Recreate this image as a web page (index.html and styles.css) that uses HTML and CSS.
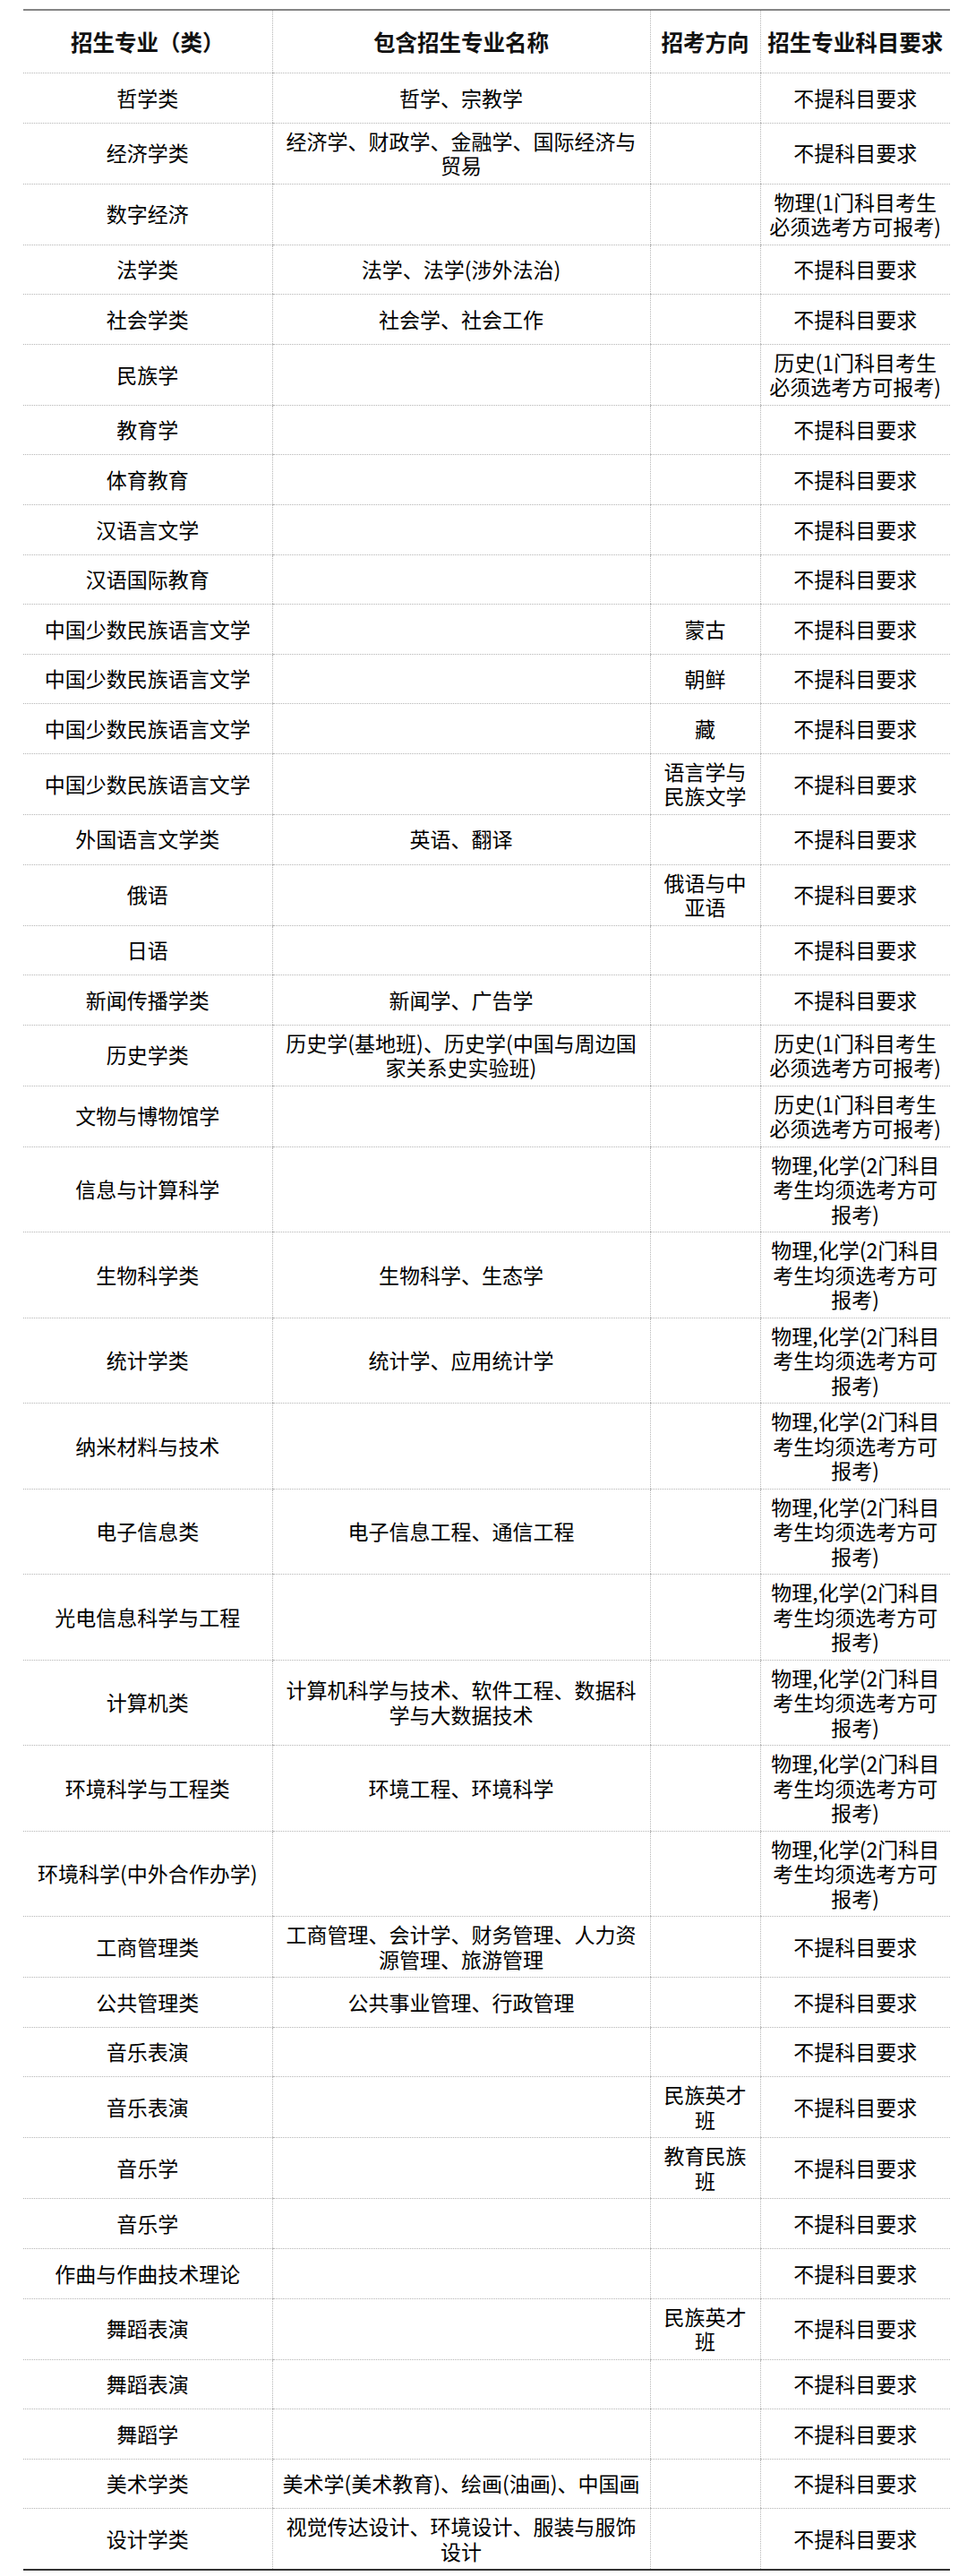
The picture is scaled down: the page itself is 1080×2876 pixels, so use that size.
FILE: index.html
```html
<!DOCTYPE html>
<html lang="zh-CN">
<head>
<meta charset="utf-8">
<title>招生专业科目要求</title>
<link rel="stylesheet" href="styles.css">
</head>
<body>
<table class="plan">
  <colgroup>
    <col class="w1"><col class="w2"><col class="w3"><col class="w4">
  </colgroup>
  <thead>
    <tr>
      <th>招生专业（类）</th>
      <th>包含招生专业名称</th>
      <th>招考方向</th>
      <th>招生专业科目要求</th>
    </tr>
  </thead>
  <tbody>
    <tr><td>哲学类</td><td>哲学、宗教学</td><td></td><td>不提科目要求</td></tr>
    <tr><td>经济学类</td><td>经济学、财政学、金融学、国际经济与贸易</td><td></td><td>不提科目要求</td></tr>
    <tr><td>数字经济</td><td></td><td></td><td>物理(1门科目考生必须选考方可报考)</td></tr>
    <tr><td>法学类</td><td>法学、法学(涉外法治)</td><td></td><td>不提科目要求</td></tr>
    <tr><td>社会学类</td><td>社会学、社会工作</td><td></td><td>不提科目要求</td></tr>
    <tr><td>民族学</td><td></td><td></td><td>历史(1门科目考生必须选考方可报考)</td></tr>
    <tr><td>教育学</td><td></td><td></td><td>不提科目要求</td></tr>
    <tr><td>体育教育</td><td></td><td></td><td>不提科目要求</td></tr>
    <tr><td>汉语言文学</td><td></td><td></td><td>不提科目要求</td></tr>
    <tr><td>汉语国际教育</td><td></td><td></td><td>不提科目要求</td></tr>
    <tr><td>中国少数民族语言文学</td><td></td><td>蒙古</td><td>不提科目要求</td></tr>
    <tr><td>中国少数民族语言文学</td><td></td><td>朝鲜</td><td>不提科目要求</td></tr>
    <tr><td>中国少数民族语言文学</td><td></td><td>藏</td><td>不提科目要求</td></tr>
    <tr><td>中国少数民族语言文学</td><td></td><td>语言学与民族文学</td><td>不提科目要求</td></tr>
    <tr><td>外国语言文学类</td><td>英语、翻译</td><td></td><td>不提科目要求</td></tr>
    <tr><td>俄语</td><td></td><td>俄语与中亚语</td><td>不提科目要求</td></tr>
    <tr><td>日语</td><td></td><td></td><td>不提科目要求</td></tr>
    <tr><td>新闻传播学类</td><td>新闻学、广告学</td><td></td><td>不提科目要求</td></tr>
    <tr><td>历史学类</td><td>历史学(基地班)、历史学(中国与周边国家关系史实验班)</td><td></td><td>历史(1门科目考生必须选考方可报考)</td></tr>
    <tr><td>文物与博物馆学</td><td></td><td></td><td>历史(1门科目考生必须选考方可报考)</td></tr>
    <tr><td>信息与计算科学</td><td></td><td></td><td>物理,化学(2门科目考生均须选考方可报考)</td></tr>
    <tr><td>生物科学类</td><td>生物科学、生态学</td><td></td><td>物理,化学(2门科目考生均须选考方可报考)</td></tr>
    <tr><td>统计学类</td><td>统计学、应用统计学</td><td></td><td>物理,化学(2门科目考生均须选考方可报考)</td></tr>
    <tr><td>纳米材料与技术</td><td></td><td></td><td>物理,化学(2门科目考生均须选考方可报考)</td></tr>
    <tr><td>电子信息类</td><td>电子信息工程、通信工程</td><td></td><td>物理,化学(2门科目考生均须选考方可报考)</td></tr>
    <tr><td>光电信息科学与工程</td><td></td><td></td><td>物理,化学(2门科目考生均须选考方可报考)</td></tr>
    <tr><td>计算机类</td><td>计算机科学与技术、软件工程、数据科学与大数据技术</td><td></td><td>物理,化学(2门科目考生均须选考方可报考)</td></tr>
    <tr><td>环境科学与工程类</td><td>环境工程、环境科学</td><td></td><td>物理,化学(2门科目考生均须选考方可报考)</td></tr>
    <tr><td>环境科学(中外合作办学)</td><td></td><td></td><td>物理,化学(2门科目考生均须选考方可报考)</td></tr>
    <tr><td>工商管理类</td><td>工商管理、会计学、财务管理、人力资源管理、旅游管理</td><td></td><td>不提科目要求</td></tr>
    <tr><td>公共管理类</td><td>公共事业管理、行政管理</td><td></td><td>不提科目要求</td></tr>
    <tr><td>音乐表演</td><td></td><td></td><td>不提科目要求</td></tr>
    <tr><td>音乐表演</td><td></td><td>民族英才班</td><td>不提科目要求</td></tr>
    <tr><td>音乐学</td><td></td><td>教育民族班</td><td>不提科目要求</td></tr>
    <tr><td>音乐学</td><td></td><td></td><td>不提科目要求</td></tr>
    <tr><td>作曲与作曲技术理论</td><td></td><td></td><td>不提科目要求</td></tr>
    <tr><td>舞蹈表演</td><td></td><td>民族英才班</td><td>不提科目要求</td></tr>
    <tr><td>舞蹈表演</td><td></td><td></td><td>不提科目要求</td></tr>
    <tr><td>舞蹈学</td><td></td><td></td><td>不提科目要求</td></tr>
    <tr><td>美术学类</td><td>美术学(美术教育)、绘画(油画)、中国画</td><td></td><td>不提科目要求</td></tr>
    <tr><td>设计学类</td><td>视觉传达设计、环境设计、服装与服饰设计</td><td></td><td>不提科目要求</td></tr>
  </tbody>
</table>
</body>
</html>
```

FILE: styles.css
```css
html, body {
  margin: 0;
  padding: 0;
  background: #ffffff;
}

body {
  font-family: "Noto Sans CJK SC", "Noto Sans", sans-serif;
  color: #000000;
}

.plan {
  margin: 10px 0 0 26px;
  width: 1035px;
  table-layout: fixed;
  border-collapse: collapse;
  border-top: 2px solid #858585;
  border-bottom: 2px solid #333333;
}

.w1 { width: 278px; }
.w2 { width: 422px; }
.w3 { width: 123px; }
.w4 { width: 212px; }

.plan th {
  height: 69px;
  padding: 0 2px;
  font-size: 24.5px;
  font-weight: 700;
  line-height: 28px;
  text-align: center;
  vertical-align: middle;
  color: #111111;
  border-bottom: 1px dotted #b5b5b5;
}

.plan td {
  height: 42.6px;
  padding: 6px 8px;
  font-size: 23px;
  font-weight: 400;
  line-height: 27.5px;
  text-align: center;
  vertical-align: middle;
  border-bottom: 1px dotted #b5b5b5;
  word-break: break-all;
}

.plan tbody tr:last-child td {
  border-bottom: none;
}

.plan th + th,
.plan td + td {
  border-left: 1px dotted #b5b5b5;
}
```
